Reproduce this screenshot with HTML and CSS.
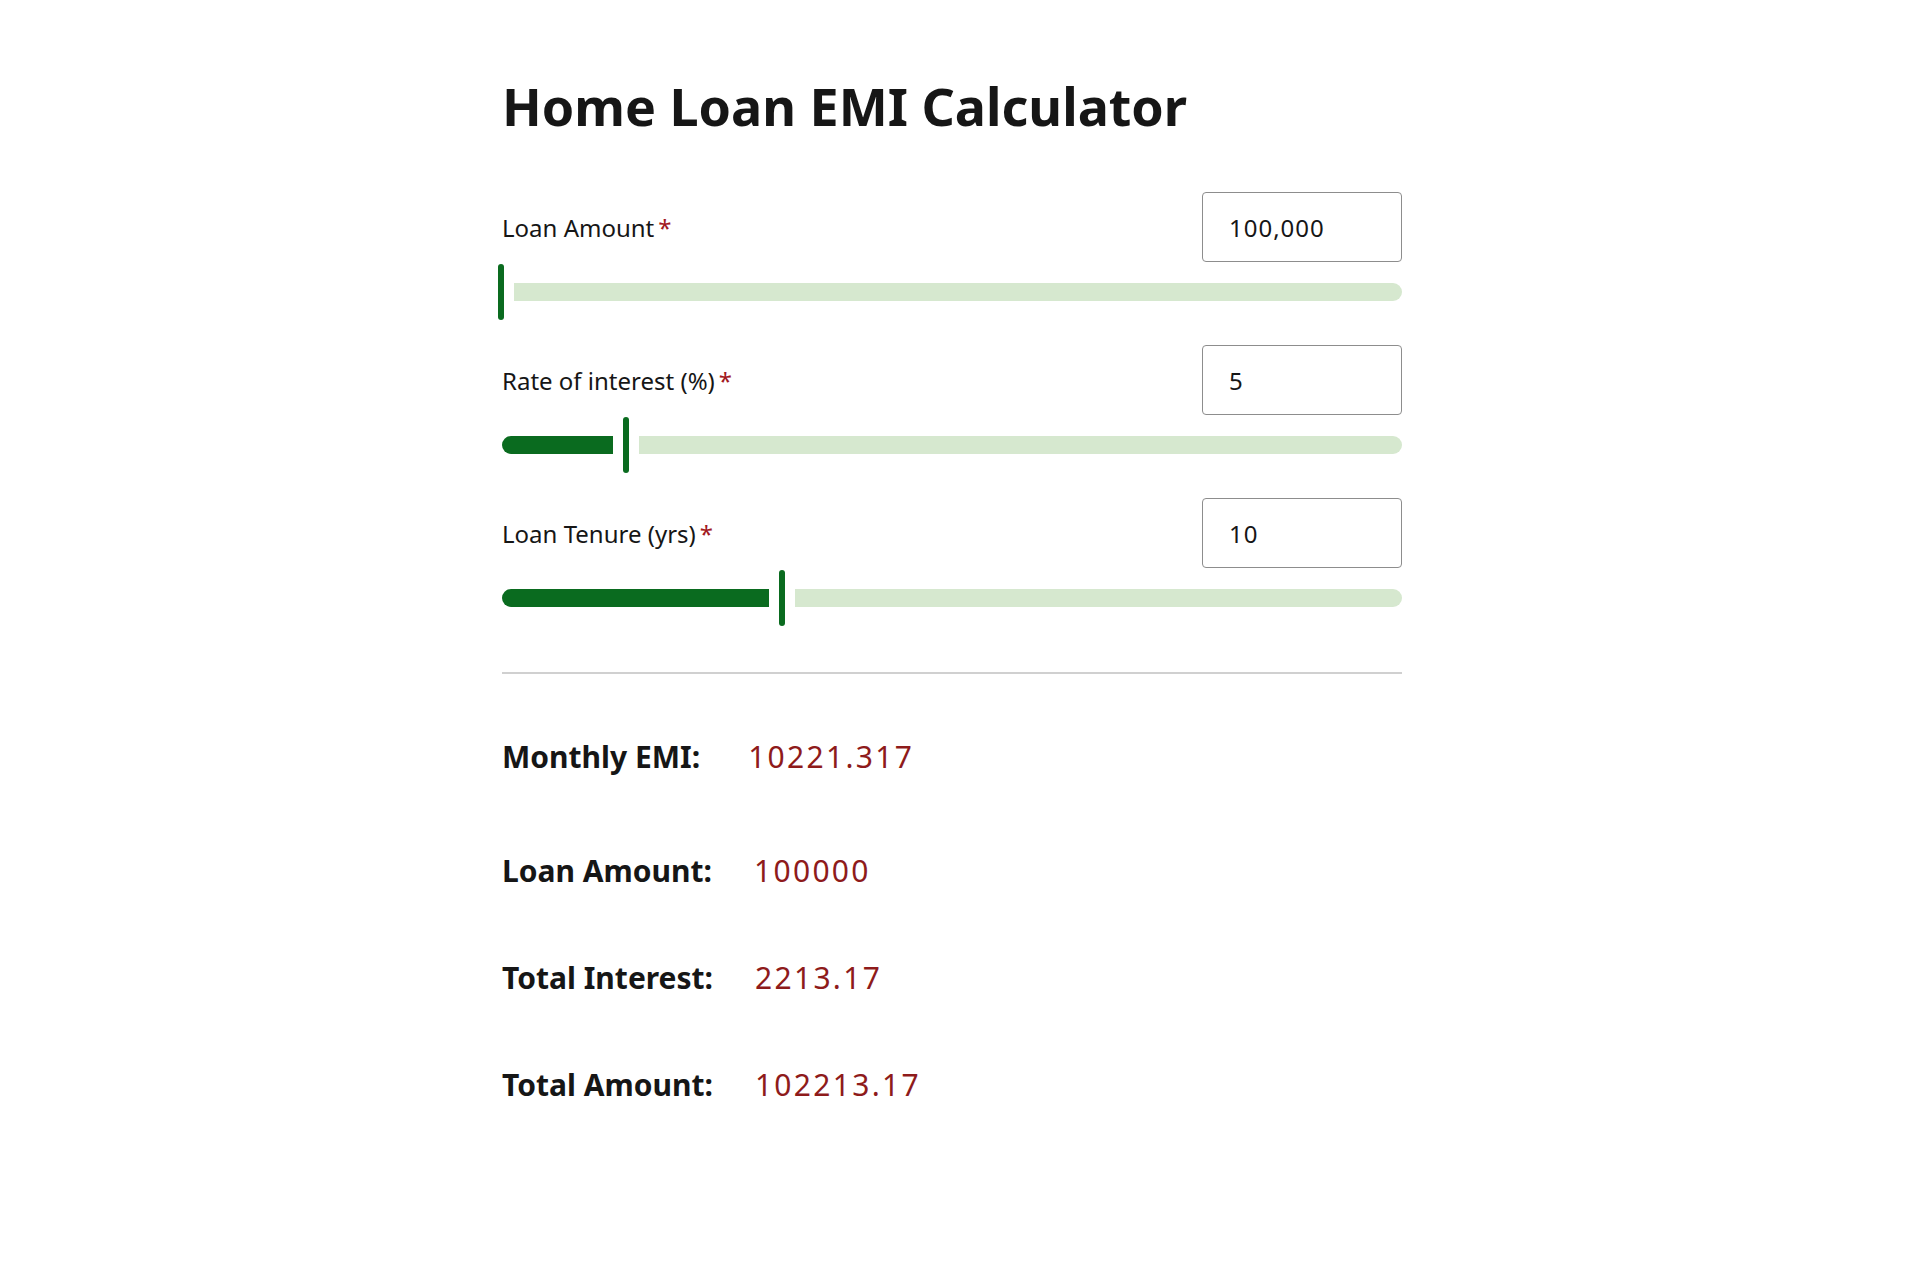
FILE: index.html
```html
<!DOCTYPE html>
<html lang="en">
<head>
    <meta charset="UTF-8">
    <meta name="viewport" content="width=device-width, initial-scale=1.0">
    <title>Home Loan EMI Calculator</title>
    <link rel="stylesheet" href="styles.css">
</head>
<body>
    <div class="calculator">
        <h1 class="title">Home Loan EMI Calculator</h1>

        <div class="field">
            <div class="field-head">
                <label class="field-label" for="amount">Loan Amount<span class="req">*</span></label>
                <input class="field-input" id="amount" type="text" value="100,000">
            </div>
            <div class="slider">
                <span class="thumb at-start"></span>
                <span class="rest"></span>
            </div>
        </div>

        <div class="field">
            <div class="field-head">
                <label class="field-label" for="rate">Rate of interest (%)<span class="req">*</span></label>
                <input class="field-input" id="rate" type="text" value="5">
            </div>
            <div class="slider">
                <span class="fill" style="width: 111px"></span>
                <span class="thumb"></span>
                <span class="rest"></span>
            </div>
        </div>

        <div class="field">
            <div class="field-head">
                <label class="field-label" for="tenure">Loan Tenure (yrs)<span class="req">*</span></label>
                <input class="field-input" id="tenure" type="text" value="10">
            </div>
            <div class="slider">
                <span class="fill" style="width: 267px"></span>
                <span class="thumb"></span>
                <span class="rest"></span>
            </div>
        </div>

        <hr class="divider">

        <div class="results">
            <p class="result first"><span class="result-label">Monthly EMI:</span><span class="result-value">10221.317</span></p>
            <p class="result"><span class="result-label">Loan Amount:</span><span class="result-value">100000</span></p>
            <p class="result"><span class="result-label">Total Interest:</span><span class="result-value">2213.17</span></p>
            <p class="result"><span class="result-label">Total Amount:</span><span class="result-value">102213.17</span></p>
        </div>
    </div>
</body>
</html>
```

FILE: styles.css
```css
body {
    margin: 0;
    background-color: #fff;
    color: #161616;
    font-family: "Noto Sans", "Open Sans", sans-serif;
}
.calculator {
    width: 900px;
    margin-left: calc(50% - 458px);
    padding-top: 73px;
}
.title {
    margin: 0 0 53px;
    font-size: 52px;
    line-height: 66px;
    font-weight: 700;
}
.field {
    margin-bottom: 25px;
}
.field-head {
    display: flex;
    justify-content: space-between;
    align-items: center;
    height: 70px;
    margin-bottom: 2px;
}
.field-label {
    font-size: 24px;
}
.req {
    color: #a2191f;
    margin-left: 4px;
}
.field-input {
    width: 200px;
    height: 70px;
    box-sizing: border-box;
    padding: 0 26px;
    border: 1.5px solid #8d8d8d;
    border-radius: 4px;
    font-family: inherit;
    font-size: 24px;
    letter-spacing: 1px;
    color: #161616;
}
.slider {
    display: flex;
    align-items: center;
    gap: 10px;
    height: 56px;
}
.fill {
    height: 18px;
    background-color: #0a6b1f;
    border-radius: 9px 0 0 9px;
}
.thumb {
    width: 6px;
    height: 56px;
    background-color: #0a6b1f;
    border-radius: 3px;
}
.thumb.at-start {
    margin-left: -4px;
}
.rest {
    flex: 1;
    height: 18px;
    background-color: #d6e8cf;
    border-radius: 0 9px 9px 0;
}
.divider {
    margin: 46px 0 0;
    border: none;
    border-top: 2px solid #d0d0d0;
}
.results {
    padding-top: 64px;
}
.result {
    margin: 0 0 70px;
    font-size: 30px;
    line-height: 37px;
}
.result.first {
    margin-bottom: 77px;
}
.result-label {
    font-weight: 700;
}
.result-value {
    margin-left: 42px;
    letter-spacing: 2.3px;
    color: #8e1b1b;
}
.result.first .result-value {
    margin-left: 48px;
}
```
